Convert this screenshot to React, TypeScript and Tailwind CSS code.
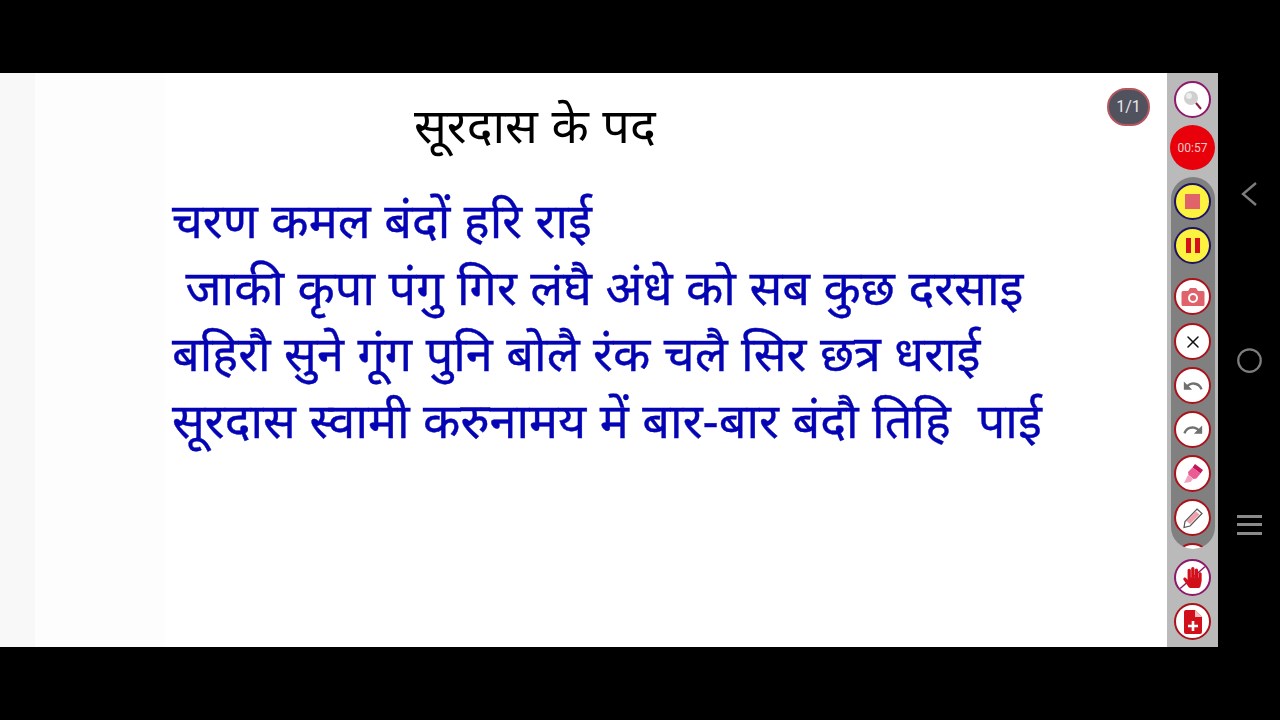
import React, { FC, ReactNode } from 'react'
import { Circle, X } from 'lucide-react'
import { MdUndo, MdRedo } from 'react-icons/md'
import { FaHandPaper } from 'react-icons/fa'

const devanagari = "font-['Liberation_Sans','Noto_Sans','Noto_Sans_Devanagari','Lohit_Devanagari','FreeSans',sans-serif]"

const lines = [
  'चरण कमल बंदों हरि राई',
  '\u00a0जाकी कृपा पंगु गिर लंघै अंधे को सब कुछ दरसाइ',
  'बहिरौ सुने गूंग पुनि बोलै रंक चलै सिर छत्र धराई',
  'सूरदास स्वामी करुनामय में बार-बार बंदौ तिहि \u00a0पाई',
]

const ToolButton: FC<{ children: ReactNode; yellow?: boolean; purple?: boolean }> = ({ children, yellow, purple }) => {
  let ring = 'border-[#a9141c] bg-white'
  if (yellow) ring = 'border-[#1c1464] bg-[#fdf23f]'
  if (purple) ring = 'border-[#8e1a6b] bg-white'
  return (
    <div className={`relative flex overflow-hidden justify-center items-center w-[37px] h-[37px] shrink-0 rounded-full border-2 ${ring}`}>
      {children}
    </div>
  )
}

const App: FC = () => {
  return (
    <div className="flex flex-col w-[1280px] h-[720px] bg-black overflow-hidden">
      <div className="h-[73px] shrink-0" />
      <div className="flex h-[574px]">
        <div className="relative w-[1167px] bg-[linear-gradient(90deg,#f8f8f8_35px,#fdfdfd_35px,#fdfdfd_165px,#ffffff_165px)]">
          <div className={`pl-[172px] ${devanagari}`}>
            <h1 className="pt-[21px] pl-[242px] text-[48.6px] leading-[64px] font-normal text-black">सूरदास के पद</h1>
            <div className="mt-[30px] text-[48.6px] leading-[66.7px] text-[#0404b4] [-webkit-text-stroke:0.4px_#0404b4]">
              {lines.map((line) => (
                <p key={line} className="whitespace-pre">
                  {line}
                </p>
              ))}
            </div>
          </div>
          <div className="absolute top-[15px] right-[17px] flex justify-center items-center w-[43px] h-[38px] rounded-full border-2 border-[#b5565e] bg-[#50525e] text-[16px] text-[#e6e6ea] font-['Roboto',sans-serif]">
            1/1
          </div>
        </div>

        <div className="flex flex-col items-center w-[51px] bg-[#bababa] pt-[8px]">
          <ToolButton purple>
            <svg width="24" height="24" viewBox="0 0 24 24">
              <circle cx="10" cy="10" r="7" fill="#cfcfcf" />
              <circle cx="8" cy="8" r="3" fill="#ececec" />
              <path d="M15 15l5 6" stroke="#8e1a3b" strokeWidth="2" />
            </svg>
          </ToolButton>
          <div className="flex justify-center items-center mt-[7px] w-[45px] h-[45px] shrink-0 rounded-full bg-[#e8000b] text-[12px] text-[#f3c8c8] font-['Roboto',sans-serif]">
            00:57
          </div>
          <div className="flex overflow-hidden flex-col items-center gap-[7px] mt-[7px] pt-[6px] w-[44px] h-[372px] shrink-0 rounded-[22px] bg-[#808080]">
            <ToolButton yellow>
              <div className="w-[15px] h-[15px] bg-[#e0636b]" />
            </ToolButton>
            <ToolButton yellow>
              <div className="flex gap-[4px]">
                <div className="w-[5px] h-[15px] bg-[#d5101a]" />
                <div className="w-[5px] h-[15px] bg-[#d5101a]" />
              </div>
            </ToolButton>
            <div className="mt-[7px] mb-[1px]">
              <ToolButton>
                <svg width="26" height="24" viewBox="0 0 26 24">
                  <path d="M3 6h5l2-3h6l2 3h5a1.500 1.500 0 0 1 1.500 1.500v12a1.500 1.500 0 0 1-1.500 1.500H3a1.500 1.500 0 0 1-1.500-1.500v-12A1.500 1.500 0 0 1 3 6z" fill="#e0636b" />
                  <circle cx="13" cy="13" r="5" fill="#fff" />
                  <circle cx="13" cy="13" r="3" fill="#e0636b" />
                </svg>
              </ToolButton>
            </div>
            <ToolButton>
              <X size={20} strokeWidth={1.800} color="#111" />
            </ToolButton>
            <ToolButton>
              <MdUndo size={22} color="#707070" />
            </ToolButton>
            <ToolButton>
              <MdRedo size={22} color="#707070" />
            </ToolButton>
            <ToolButton>
              <svg width="26" height="26" viewBox="0 0 26 26">
                <path d="M15 3l8 6-2.500 3.500-8-6z" fill="#c2185b" />
                <path d="M12.500 6.500l8 6-4 5-3 .5-5-4-.5-3z" fill="#ea5c94" />
                <path d="M8 14l5 4-2.500 3-6.500 1z" fill="#f4a0c0" />
              </svg>
            </ToolButton>
            <ToolButton>
              <svg width="24" height="24" viewBox="0 0 24 24">
                <path d="M16 3l5 4.500L9 20l-6 1.500 1-6z" fill="#fff" stroke="#555" strokeWidth="1.200" />
                <path d="M15 5.500l3.500 3L9 18l-3.500-3z" fill="#f0a0a8" />
              </svg>
            </ToolButton>
            <ToolButton>
              <span />
            </ToolButton>
          </div>
          <div className="mt-[10px]">
            <ToolButton purple>
              <svg className="absolute inset-0 w-full h-full" viewBox="0 0 33 33">
                <path d="M2.500 29L30 4.700" stroke="#8e1a6b" strokeWidth="1.500" />
              </svg>
              <FaHandPaper size={21} color="#d2101c" className="relative" />
            </ToolButton>
          </div>
          <div className="mt-[7px]">
            <ToolButton>
              <svg width="24" height="26" viewBox="0 0 24 26">
                <path d="M5 1h9l7 7v15a2 2 0 0 1-2 2H5a2 2 0 0 1-2-2V3a2 2 0 0 1 2-2z" fill="#d2101c" />
                <path d="M14 1v7h7z" fill="#f5c0c0" />
                <path d="M12 12v10M7 17h10" stroke="#fff" strokeWidth="2.600" />
              </svg>
            </ToolButton>
          </div>
        </div>

        <div className="flex flex-col items-center flex-1 text-[#7d7d7d]">
          <div className="mt-[108px]">
            <svg width="16" height="26" viewBox="0 0 16 26" fill="none" stroke="currentColor" strokeWidth="2.400">
              <path d="M15 2L2 13l13 11" />
            </svg>
          </div>
          <div className="mt-[140px]">
            <Circle size={27} strokeWidth={2} />
          </div>
          <div className="flex flex-col gap-[5.300px] mt-[141px]">
            <div className="w-[25px] h-[3px] bg-[#8a8a8a]" />
            <div className="w-[25px] h-[3px] bg-[#8a8a8a]" />
            <div className="w-[25px] h-[3px] bg-[#8a8a8a]" />
          </div>
        </div>
      </div>
      <div className="h-[73px] shrink-0" />
    </div>
  )
}

export default App
